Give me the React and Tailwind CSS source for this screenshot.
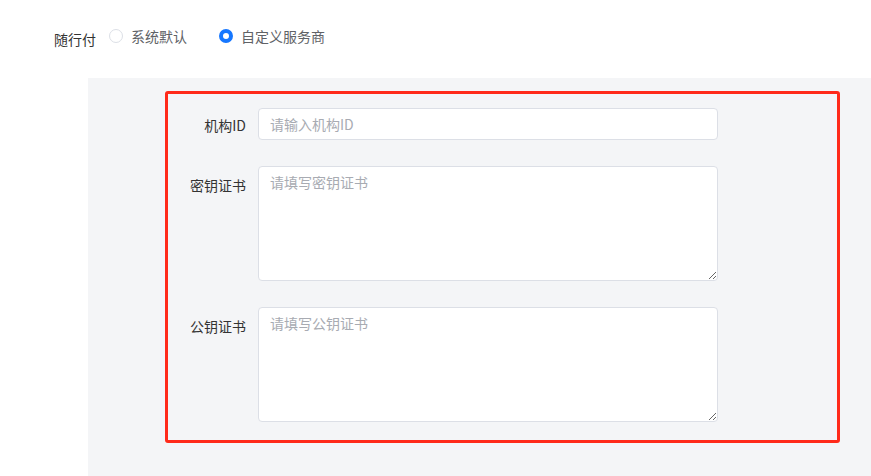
export default function App() {
  return (
    <div
      className="w-[871px] h-[476px] overflow-hidden bg-white text-[14px]"
      style={{ fontFamily: '"Noto Sans CJK SC", "Noto Sans", sans-serif' }}
    >
      {/* payment provider row */}
      <div className="flex items-start pl-[54px] pt-[26px] h-[78px]">
        <span className="text-[#333] leading-5 pt-[3px]">随行付</span>
        <label className="flex items-center ml-[13px] leading-5">
          <span className="w-[14px] h-[14px] rounded-full border border-[#dcdfe6] bg-white" />
          <span className="ml-2 text-[#606266]">系统默认</span>
        </label>
        <label className="flex items-center ml-[32px] leading-5">
          <span className="w-[14px] h-[14px] rounded-full border-[4px] border-[#1677ff] bg-white" />
          <span className="ml-2 text-[#606266]">自定义服务商</span>
        </label>
      </div>

      {/* settings panel */}
      <div className="ml-[88px] h-[398px] bg-[#f4f5f7] pt-[13px] pl-[77px]">
        <div className="w-[675px] h-[352px] border-[3px] border-[#ff2a1a] rounded-[3px] pt-[14px] flex flex-col gap-[26px]">
          <div className="flex">
            <div className="w-[78px] text-right text-[#333] leading-[26px] pt-[4px]">机构ID</div>
            <input
              className="ml-3 w-[460px] h-8 rounded border border-[#dcdfe6] bg-white px-[11px] text-[14px] text-[#606266] placeholder:text-[#a8abb2] outline-none"
              placeholder="请输入机构ID"
            />
          </div>
          <div className="flex">
            <div className="w-[78px] text-right text-[#333] leading-[26px] pt-[6px]">密钥证书</div>
            <textarea
              className="ml-3 w-[460px] h-[115px] rounded border border-[#dcdfe6] bg-white px-[11px] py-[5px] leading-[20px] text-[14px] text-[#606266] placeholder:text-[#a8abb2] outline-none"
              placeholder="请填写密钥证书"
            />
          </div>
          <div className="flex">
            <div className="w-[78px] text-right text-[#333] leading-[26px] pt-[6px]">公钥证书</div>
            <textarea
              className="ml-3 w-[460px] h-[115px] rounded border border-[#dcdfe6] bg-white px-[11px] py-[5px] leading-[20px] text-[14px] text-[#606266] placeholder:text-[#a8abb2] outline-none"
              placeholder="请填写公钥证书"
            />
          </div>
        </div>
      </div>
    </div>
  );
}
